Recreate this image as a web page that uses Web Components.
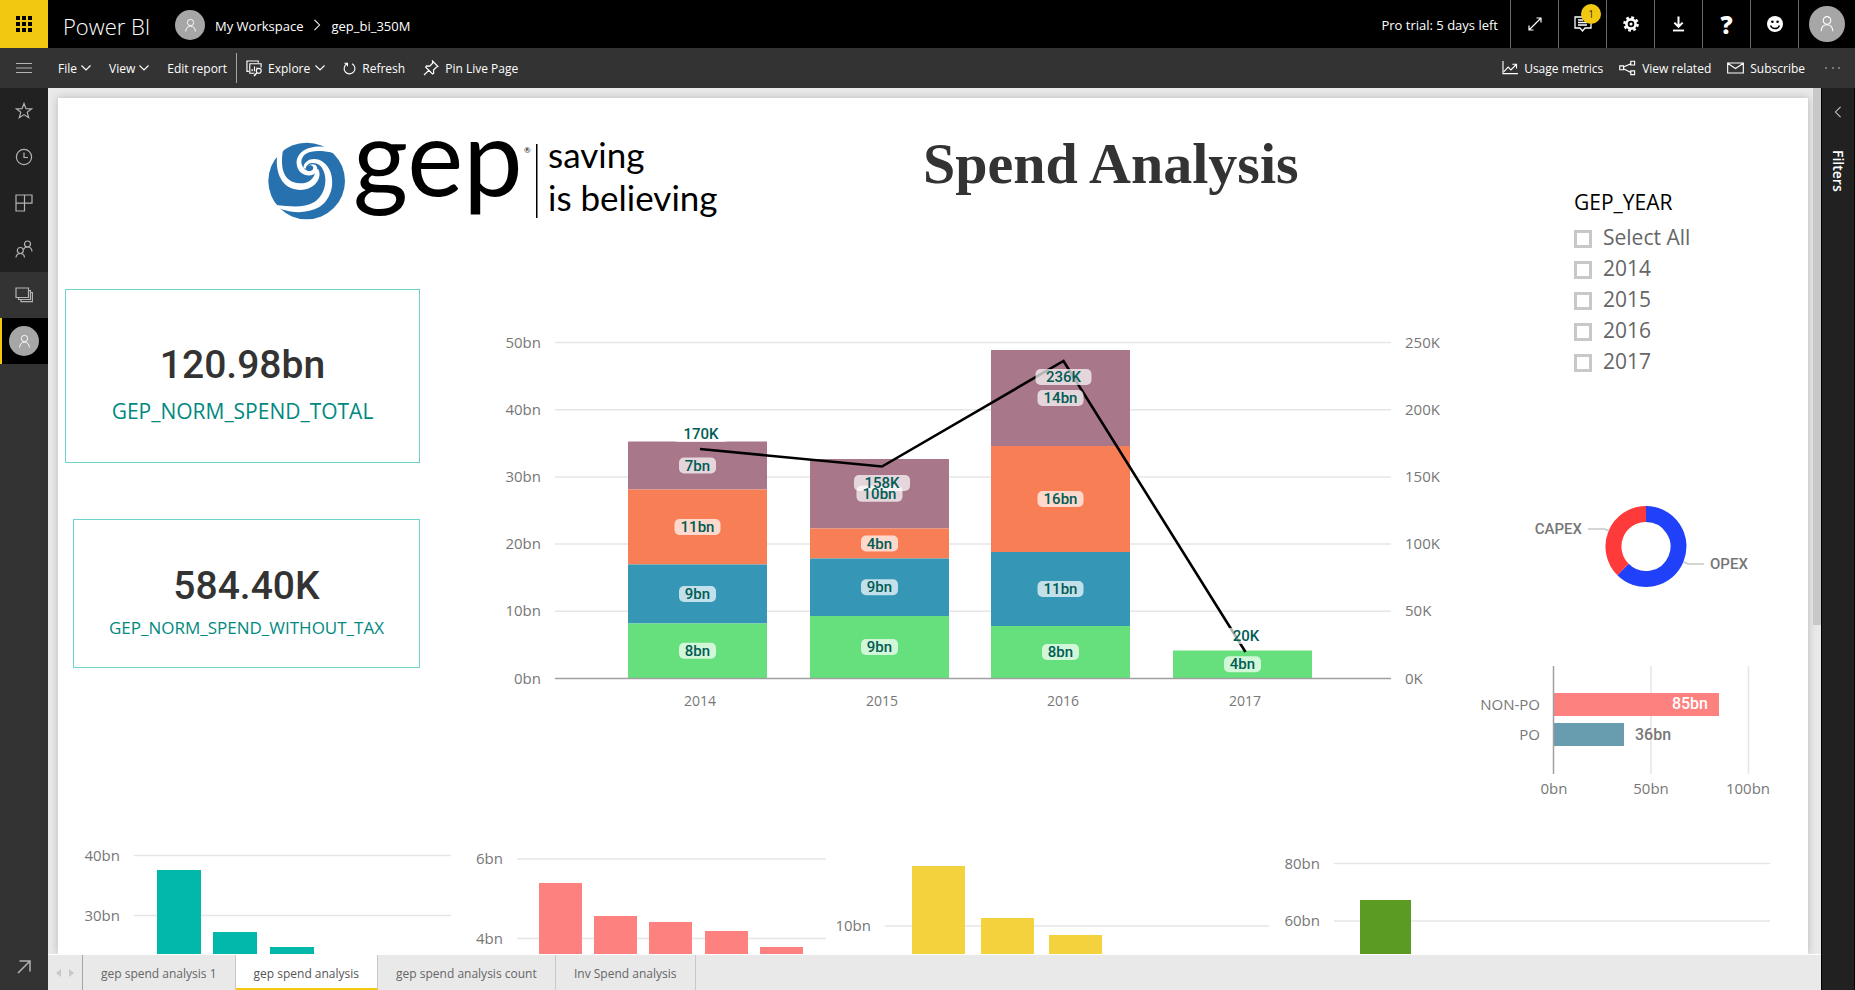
<!DOCTYPE html>
<html lang="en">
<head>
<meta charset="utf-8">
<title>Power BI - gep_bi_350M</title>
<style>
  body { margin: 0; background: #e9e9e9; font-family: "Open Sans", "Noto Sans", sans-serif; }
</style>
</head>
<body>
<power-bi-app></power-bi-app>
<script>
const UI = '"Open Sans","Noto Sans",sans-serif';
const DIN = 'Roboto,sans-serif';

/* Base class: renders css + html into an open shadow root. */
class Base extends HTMLElement {
  connectedCallback() {
    if (this.shadowRoot) return;
    const root = this.attachShadow({ mode: 'open' });
    const t = document.createElement('template');
    t.innerHTML = `<style>*{box-sizing:border-box}:host{display:block}${this.css ? this.css() : ''}</style>${this.html()}`;
    root.appendChild(t.content.cloneNode(true));
  }
}
const define = (n, c) => customElements.define(n, c);

/* ---------- icons ---------- */
const person = '<circle cx="10" cy="6" r="4.2"/><path d="M3.5 18c.2-4.600 2.800-7.200 6.500-7.200s6.300 2.600 6.500 7.200"/>';
const ICONS = {
  waffle: ['0 0 16 16', '<path fill="currentColor" stroke="none" d="M0 0h4v4H0zM6 0h4v4H6zM12 0h4v4h-4zM0 6h4v4H0zM6 6h4v4H6zM12 6h4v4h-4zM0 12h4v4H0zM6 12h4v4H6zM12 12h4v4h-4z"/>'],
  person: ['0 0 20 20', person],
  right: ['0 0 8 14', '<path d="M1 1l6 6-6 6"/>'],
  left: ['0 0 8 14', '<path d="M7 1L1 7l6 6"/>'],
  down: ['0 0 10 6', '<path d="M.5.5L5 5 9.500.5"/>'],
  menu: ['0 0 16 12', '<path d="M0 1.500h16M0 6h16M0 10.500h16"/>'],
  explore: ['0 0 18 18', '<path d="M3 12H1V1h12v2M9 14H4V4h12v4M6.500 12V9.500M9 12V7M11.500 9V8"/><circle cx="13.500" cy="11.500" r="2.600"/><path stroke-width="1.600" d="M11.600 13.500L8.500 17"/>'],
  refresh: ['0 0 14 14', '<path d="M4.500 1.800A5.800 5.800 0 1 0 9.800 1.900M4.800 4.500V1.300H1.500"/>'],
  pin: ['0 0 16 16', '<path d="M9.500 1l5.500 5.500-1.500.5-3 3 .2 3.200-1.200.8L2.700 7.200l.8-1.300 3.300.3 2.800-3zM5.800 10.400L1 15"/>'],
  chart: ['0 0 17 15', '<path d="M1 0v13.500h16M2 11.500l4.500-5 3 3L15 4M11 3.500h4.500V8"/>'],
  share: ['0 0 18 16', '<path d="M.8 5.800h4v4h-4zM12.500.8h4v4h-4zM12.500 11h4v4h-4zM4.800 7L12.500 3.500M4.800 8.800L12.500 12.800"/>'],
  mail: ['0 0 18 12', '<path d="M.700.700h16.600v10.600H.7zM.7 1l8.300 5.500L17.300 1"/>'],
  dots: ['0 0 16 4', '<path fill="currentColor" stroke="none" d="M0 1h2v2H0zM7 1h2v2H7zM13 1h2v2h-2z"/>'],
  expand: ['0 0 14 14', '<path d="M1.500 12.500l11-11M8.500 1h4.500v4.500M1 8.500V13h4.500"/>'],
  comment: ['0 0 18 17', '<path stroke-width="1.300" d="M10 1H1v11h5l2.500 3L11 12h6V8M4 4h5M4 6.500h9M4 9h9"/>'],
  gear: ['0 0 16 16', '<g fill="none"><circle cx="8" cy="8" r="4.600" stroke-width="2.600"/><circle cx="8" cy="8" r="6.600" stroke-width="2.400" stroke-dasharray="2.800 2.384"/></g><circle cx="8" cy="8" r="1.500" fill="currentColor" stroke="none"/>'],
  download: ['0 0 14 16', '<path stroke-width="2.200" d="M7 0v10.500M2.500 6.500L7 11l4.500-4.500"/><path stroke-width="2" d="M1 15h12"/>'],
  smile: ['0 0 16 16', '<circle cx="8" cy="8" r="8" fill="currentColor" stroke="none"/><g fill="#000" stroke="none"><circle cx="5.400" cy="5.800" r="1.300"/><circle cx="10.600" cy="5.800" r="1.300"/></g><path stroke="#000" stroke-width="1.400" d="M3.500 9.500c1.500 4 7.500 4 9 0"/>'],
  star: ['0 0 18 18', '<path d="M9 1.500l2 5.200 5.500.2-4.300 3.400 1.500 5.400L9 12.600l-4.700 3.100 1.500-5.400L1.500 6.900 7 6.700z"/>'],
  clock: ['0 0 18 18', '<circle cx="9" cy="9" r="7.600"/><path d="M9 4.500v5h4"/>'],
  apps: ['0 0 18 18', '<path d="M1 1h16v8.200H1zM1 9.200v7.800h8.500V1"/>'],
  people: ['0 0 18 18', '<circle cx="12.500" cy="4" r="3"/><circle cx="5.300" cy="10.500" r="3"/><path d="M1 17.500c.2-2.500 1.800-4 4.300-4s4 1.500 4.200 4M8.500 9.500c.7-1.700 2-2.500 4-2.500 2.600 0 4.300 1.500 4.500 4.500"/>'],
  stack: ['0 0 18 16', '<path d="M1 1h12.500v9.500H1zM3.500 10.500v2H15.500V3.500h-2M6 12.500v2.200h11.500V5.500h-2"/>'],
  out: ['0 0 14 14', '<path stroke-width="1.500" d="M1 13L13 1M2.500 1H13v10.500"/>'],
};
define('ui-icon', class extends Base {
  css() { return `:host{display:inline-flex;flex:none;width:${this.getAttribute('w') || 16}px;height:${this.getAttribute('h') || 16}px}svg{width:100%;height:100%;display:block}`; }
  html() { const [vb, p] = ICONS[this.getAttribute('name')];
    return `<svg viewBox="${vb}" fill="none" stroke="currentColor" stroke-width="1.200" aria-hidden="true">${p}</svg>`; }
});
define('user-avatar', class extends Base {
  css() { const s = this.getAttribute('size') || 30;
    return `:host{display:flex;flex:none;align-items:center;justify-content:center;width:${s}px;height:${s}px;border-radius:50%;background:#a6a6a6;color:#fff}`; }
  html() { const i = this.getAttribute('icon') || 15; return `<ui-icon name="person" w="${i}" h="${i}"></ui-icon>`; }
});

/* ---------- top bar ---------- */
define('top-bar', class extends Base {
  css() { return `
    :host{display:flex;height:48px;background:#000;color:#fff;font-size:13px;align-items:stretch}
    button{font:inherit;color:inherit;border:0;background:none;padding:0;display:flex;align-items:center;justify-content:center}
    a{color:inherit;text-decoration:none}
    .waffle{width:48px;background:#f2c811;color:#000}
    .brand{display:flex;align-items:center;margin-left:15px;font-size:22px;font-weight:300;width:112px;padding-top:3px}
    nav{display:flex;align-items:center;flex:1;gap:10px;padding-top:2px}
    nav a{padding-top:2px}
    .trial{display:flex;align-items:center;padding:2px 12px 0 0}
    .cell{width:48px;border-left:1px solid #666;position:relative}
    .cell.me{width:57px}
    .q{font-size:24px;font-weight:800;font-family:${UI}}
    .badge{position:absolute;left:22px;top:4px;width:20px;height:20px;border-radius:50%;background:#f2c811;color:#333;font-size:10px;line-height:20px;text-align:center}`; }
  html() { return `
    <button class="waffle" aria-label="Apps"><ui-icon name="waffle"></ui-icon></button>
    <a class="brand" href="#">Power BI</a>
    <nav><user-avatar></user-avatar><a href="#">My Workspace</a><ui-icon name="right" w="8" h="12"></ui-icon><a href="#">gep_bi_350M</a></nav>
    <span class="trial">Pro trial: 5 days left</span>
    <button class="cell" aria-label="Full screen"><ui-icon name="expand" w="14" h="14"></ui-icon></button>
    <button class="cell" aria-label="Notifications"><ui-icon name="comment" w="18" h="17"></ui-icon><span class="badge">1</span></button>
    <button class="cell" aria-label="Settings"><ui-icon name="gear" w="16" h="16"></ui-icon></button>
    <button class="cell" aria-label="Download"><ui-icon name="download" w="13" h="16"></ui-icon></button>
    <button class="cell q">?</button>
    <button class="cell" aria-label="Feedback"><ui-icon name="smile"></ui-icon></button>
    <button class="cell me" aria-label="Account"><user-avatar size="36" icon="18"></user-avatar></button>`; }
});

/* ---------- toolbar ---------- */
define('tool-bar', class extends Base {
  css() { return `
    :host{display:flex;height:40px;background:#333;color:#fff;font-size:12px;align-items:center}
    button{font:inherit;color:inherit;border:0;background:none;padding:0;display:flex;align-items:center;white-space:nowrap}
    .menu{width:48px;height:40px;justify-content:center;color:#b3b3b3}
    .group{display:flex;gap:16px}
    .left{padding-left:10px;flex:1;gap:18px}
    .drop{gap:4px}
    .ic{gap:6px}
    .explore{border-left:1px solid #a6a6a6;height:30px;padding-left:9px;margin-left:-9px;gap:5px}
    .more{color:#777;margin:0 14px 0 4px}`; }
  html() { return `
    <button class="menu" aria-label="Menu"><ui-icon name="menu" w="16" h="12"></ui-icon></button>
    <div class="group left" role="toolbar">
      <button class="drop"><span>File</span><ui-icon name="down" w="10" h="6"></ui-icon></button>
      <button class="drop"><span>View</span><ui-icon name="down" w="10" h="6"></ui-icon></button>
      <button><span>Edit report</span></button>
      <button class="explore"><ui-icon name="explore" w="17" h="17"></ui-icon><span>Explore</span><ui-icon name="down" w="10" h="6"></ui-icon></button>
      <button class="ic"><ui-icon name="refresh" w="13" h="13"></ui-icon><span>Refresh</span></button>
      <button class="ic"><ui-icon name="pin"></ui-icon><span>Pin Live Page</span></button>
    </div>
    <div class="group">
      <button class="ic"><ui-icon name="chart" w="16" h="14"></ui-icon><span>Usage metrics</span></button>
      <button class="ic"><ui-icon name="share" w="17" h="16"></ui-icon><span>View related</span></button>
      <button class="ic"><ui-icon name="mail" w="17" h="12"></ui-icon><span>Subscribe</span></button>
      <button class="more" aria-label="More"><ui-icon name="dots" w="16" h="4"></ui-icon></button>
    </div>`; }
});

/* ---------- left navigation ---------- */
define('side-nav', class extends Base {
  css() { return `
    :host{display:flex;flex-direction:column;width:48px;background:#333;color:#b3b3b3}
    button{border:0;padding:0;width:48px;height:46px;background:#212121;color:inherit;display:flex;align-items:center;justify-content:center}
    .stack{background:#333}
    .active{background:#000;border-left:2px solid #f2c811;border-right:2px solid #000}
    .out{background:none;margin-top:auto}`; }
  html() { return `
    <button aria-label="Favorites"><ui-icon name="star" w="18" h="18"></ui-icon></button>
    <button aria-label="Recent"><ui-icon name="clock" w="18" h="18"></ui-icon></button>
    <button aria-label="Apps"><ui-icon name="apps" w="18" h="18"></ui-icon></button>
    <button aria-label="Shared with me"><ui-icon name="people" w="18" h="18"></ui-icon></button>
    <button class="stack" aria-label="Workspaces"><ui-icon name="stack" w="18" h="16"></ui-icon></button>
    <button class="active" aria-label="My Workspace"><user-avatar></user-avatar></button>
    <button class="out" aria-label="Get data"><ui-icon name="out" w="14" h="14"></ui-icon></button>`; }
});

/* ---------- filters pane ---------- */
define('filters-pane', class extends Base {
  css() { return `
    :host{display:flex;flex-direction:column;align-items:center;width:34px;background:#212121;color:#fff;border-left:1px solid #000;border-right:1px solid #000;padding-top:18px}
    button{border:0;padding:0;background:none;color:#ccc;display:flex}
    span{writing-mode:vertical-rl;margin-top:32px;font-size:14px;font-weight:600;line-height:18px}`; }
  html() { return `<button aria-label="Expand filters"><ui-icon name="left" w="8" h="12"></ui-icon></button><span>Filters</span>`; }
});

/* ---------- page tabs ---------- */
define('page-tabs', class extends Base {
  css() { return `
    :host{display:flex;height:36px;background:#e9e9e9;border-top:1px solid #fff;font-size:12px;color:#666}
    .arrows{display:flex;width:35px;align-items:center;justify-content:space-evenly;border-right:1px solid #a6a6a6}
    button{font:inherit;color:inherit;background:none;border:0;padding:0}
    .arrows button{width:0;height:0;border:4px solid transparent}
    .prev{border-right:5px solid #c8c8c8!important;border-left-width:0!important}
    .next{border-left:5px solid #c8c8c8!important;border-right-width:0!important}
    .tab{padding:2px 18px 0;border-right:1px solid #c8c8c8;min-width:140px}
    .tab.on{background:#fff;border-bottom:2px solid #f2c811;padding-top:4px;color:#555}`; }
  html() { return `<div class="arrows"><button class="prev" aria-label="Previous"></button><button class="next" aria-label="Next"></button></div>
    <button class="tab">gep spend analysis 1</button><button class="tab on">gep spend analysis</button>
    <button class="tab">gep spend analysis count</button><button class="tab">Inv Spend analysis</button>`; }
});

/* ---------- report visuals ---------- */
define('gep-logo', class extends Base {
  css() { return `svg{display:block;width:100%;height:auto;overflow:visible}`; }
  html() { return `<svg viewBox="0 0 450 86" role="img" aria-label="gep saving is believing">
    <g transform="translate(0 3) scale(.3333) translate(-804 -188)">
      <circle cx="920" cy="302" r="115" fill="#2772ae"/>
      <g fill="#fff">
        <path d="M982 200C930 192 888 212 890 250C892 284 936 298 950 272C958 254 938 244 922 258C934 250 944 260 938 268C926 280 904 264 904 244C906 216 940 204 1000 218Z"/>
        <path d="M836 204C820 262 838 328 900 329C950 328 968 286 954 266L946 268C946 292 928 310 898 309C852 306 838 266 850 204Z"/>
        <path d="M826 377C862 400 920 402 958 380C1006 350 1008 276 972 247C946 226 912 238 910 262L917 266C920 244 948 244 962 258C986 286 980 342 942 366C910 384 872 378 826 374Z"/>
      </g>
    </g>
    <g font-family="Lato,sans-serif" fill="#000">
      <text x="85" y="56" font-size="106">gep</text>
      <text x="256" y="13" font-size="8">®</text>
      <path d="M268 4h1.500v74H268z"/>
      <text x="280" y="28" font-size="35">saving</text>
      <text x="280" y="71" font-size="35">is believing</text>
    </g></svg>`; }
});

define('kpi-card', class extends Base {
  css() { return `
    :host{display:flex;flex-direction:column;align-items:center;justify-content:center;border:1px solid #6ed4cb;text-align:center;padding-top:14px}
    .value{font:500 39px/48px ${DIN};color:#333}
    .label{font-size:21px;line-height:28px;color:#01897f;margin-top:8px;white-space:nowrap}
    :host([compact]) .label{font-size:17px;line-height:24px;margin-top:6px}`; }
  html() { return `<div class="value"><slot name="value"></slot></div><div class="label"><slot></slot></div>`; }
});

const text = (x, y, s, o = {}) => `<text x="${x}" y="${y}" text-anchor="${o.a || 'middle'}" font-size="${o.s || 15}" fill="${o.c || '#777'}" font-weight="${o.w || 400}" font-family='${o.f || UI}'>${s}</text>`;
const SVG_CSS = 'svg{display:block;width:100%;height:auto}';

define('combo-chart', class extends Base {
  css() { return SVG_CSS; }
  html() {
    const colors = ['#a87789', '#f77e55', '#3596b5', '#66df7d'];
    const data = [
      { x: 148, year: 2014, edges: [121.5, 169.5, 244.5, 303.5, 358], labels: ['7bn', '11bn', '9bn', '8bn'] },
      { x: 330, year: 2015, edges: [139, 208.5, 238.5, 296, 358], labels: ['10bn', '4bn', '9bn', '9bn'] },
      { x: 511, year: 2016, edges: [30, 126, 232, 306, 358], labels: ['14bn', '16bn', '11bn', '8bn'] },
      { x: 693, year: 2017, edges: [330.5, 358], labels: ['4bn'] }];
    const pills = [];
    let o = '';
    for (let i = 0; i <= 5; i++) {
      const y = 22.5 + i * 67.2;
      if (i < 5) o += `<path d="M75 ${y}H911" stroke="#e6e6e6" stroke-width="1.500"/>`;
      o += text(61, y + 5, (50 - i * 10) + 'bn', { a: 'end' }) + text(925, y + 5, (250 - i * 50) + 'K', { a: 'start' });
    }
    for (const d of data) {
      const c = colors.slice(4 - d.labels.length);
      d.labels.forEach((l, i) => {
        o += `<rect x="${d.x}" y="${d.edges[i]}" width="139" height="${d.edges[i + 1] - d.edges[i]}" fill="${c[i]}"/>`;
        pills.push([d.x + 69.5, (d.edges[i] + d.edges[i + 1]) / 2, l, l.length > 3 ? 46 : 37]);
      });
      o += text(d.x + 72, 386, d.year, { s: 14 });
    }
    o += '<path d="M75 358.500H911" stroke="#a0a0a0" stroke-width="1.500"/>';
    o += '<path d="M220 129L402 146.500 583.500 41 765.500 332" fill="none" stroke="#000" stroke-width="2.600"/>';
    pills.push([221, 114, '170K', 56], [402, 163, '158K', 56], [583.5, 57, '236K', 56], [766, 316, '20K', 46]);
    for (const [x, y, , w] of pills) o += `<rect x="${x - w / 2}" y="${y - 8}" width="${w}" height="16" rx="5" fill="#fff" opacity=".7"/>`;
    for (const [x, y, s] of pills) o += text(x, y + 5, s, { f: DIN, w: 500, c: '#015c55' });
    return `<svg viewBox="0 0 980 400" role="img" aria-label="Spend by year">${o}</svg>`;
  }
});

define('donut-chart', class extends Base {
  css() { return SVG_CSS; }
  html() { return `<svg viewBox="0 0 348 150" role="img" aria-label="CAPEX and OPEX">
    <g fill="none" stroke-width="16">
      <path d="M186 34A32.500 32.500 0 1 1 163 89.500" stroke="#2040fa"/>
      <path d="M163 89.500A32.500 32.500 0 0 1 186 34" stroke="#ff3a3a"/>
    </g>
    <path d="M128 49h17l4 2M224 82l4 2h16" fill="none" stroke="#c8c8c8" stroke-width="1.500"/>
    ${text(122, 54, 'CAPEX', { a: 'end', f: DIN, w: 500 })}${text(250, 89, 'OPEX', { a: 'start', f: DIN, w: 500 })}</svg>`; }
});

define('po-chart', class extends Base {
  css() { return SVG_CSS; }
  html() { return `<svg viewBox="0 0 348 180" role="img" aria-label="PO and non-PO spend">
    <path d="M191 36v108M288.500 36v108" stroke="#e6e6e6" stroke-width="1.500"/>
    <rect x="94" y="63" width="165" height="23" fill="#fd817e"/><rect x="94" y="93" width="70" height="23" fill="#679dae"/>
    <path d="M93.500 36v108" stroke="#a0a0a0" stroke-width="1.500"/>
    ${text(80, 80, 'NON-PO', { a: 'end' })}${text(80, 110, 'PO', { a: 'end' })}
    ${text(248, 79, '85bn', { a: 'end', f: DIN, w: 500, c: '#fff', s: 16 })}${text(175, 110, '36bn', { a: 'start', f: DIN, w: 500, s: 16 })}
    ${text(94, 164, '0bn')}${text(191, 164, '50bn')}${text(288, 164, '100bn')}</svg>`; }
});

/* Column chart set by attributes: ticks "label,y;...", bars "x,top;...". */
define('column-chart', class extends Base {
  css() { return SVG_CSS; }
  html() {
    const list = n => this.getAttribute(n).split(';').map(s => s.split(','));
    const [w, x0, x1, bw] = ['w', 'from', 'to', 'bar'].map(n => +this.getAttribute(n));
    return `<svg viewBox="0 0 ${w} 160">` +
      list('ticks').map(([l, y]) => `<path d="M${x0} ${y}H${x1}" stroke="#e6e6e6" stroke-width="1.500"/>` + text(x0 - 14, +y + 5, l, { a: 'end' })).join('') +
      list('bars').map(([x, y]) => `<rect x="${x}" y="${y}" width="${bw}" height="${160 - y}" fill="${this.getAttribute('color')}"/>`).join('') + '</svg>';
  }
});

define('year-slicer', class extends Base {
  css() { return `
    fieldset{border:0;margin:0;padding:0;min-width:0}
    legend{padding:0;font-size:21px;line-height:28px;color:#000;margin-bottom:6px}
    label{display:flex;align-items:center;gap:11px;font-size:21px;line-height:31px;color:#666;height:31px}
    input{appearance:none;width:18px;height:18px;margin:2px 0 0;border:3px solid #c8c8c8;background:#fff}`; }
  html() { return `<fieldset><legend>GEP_YEAR</legend>${['Select All', 2014, 2015, 2016, 2017].map(v => `<label><input type="checkbox">${v}</label>`).join('')}</fieldset>`; }
});

define('report-page', class extends Base {
  css() { return `
    :host{background:#fff;box-shadow:0 0 8px rgba(0,0,0,.22);min-width:0}
    .upper{display:grid;grid-template-columns:1402fr 348fr}
    .upper>*,.body>*,.lower>*,.head>*{min-width:0}
    .head{display:grid;grid-template-columns:210fr 450fr 205fr 537fr;height:191px;padding-top:42px}
    gep-logo{grid-column:2}
    h1{grid-column:4;margin:0;font:700 58px/48px "Liberation Serif",serif;color:#333;white-space:nowrap}
    .body{display:grid;grid-template-columns:422fr 980fr}
    .cards{padding:0 60px 0 7px}
    .first{height:174px}
    .second{height:149px;margin:56px 0 0 8px}
    combo-chart{margin-top:31px}
    .slicer{height:382px;padding:90px 0 0 114px}
    .lower{display:grid;grid-template-columns:410fr 360fr 448fr 532fr;margin-top:20px}`; }
  html() { return `
    <div class="upper">
      <div>
        <header class="head"><gep-logo></gep-logo><h1>Spend Analysis</h1></header>
        <div class="body">
          <div class="cards">
            <kpi-card class="first"><span slot="value">120.98bn</span>GEP_NORM_SPEND_TOTAL</kpi-card>
            <kpi-card class="second" compact><span slot="value">584.40K</span>GEP_NORM_SPEND_WITHOUT_TAX</kpi-card>
          </div>
          <combo-chart></combo-chart>
        </div>
      </div>
      <div><div class="slicer"><year-slicer></year-slicer></div><donut-chart></donut-chart><po-chart></po-chart></div>
    </div>
    <div class="lower">
      <column-chart w="410" from="76" to="393" bar="44" color="#01b8aa" ticks="40bn,25.5;30bn,85.5" bars="99,40;155,102;212,117"></column-chart>
      <column-chart w="360" from="49" to="358" bar="43" color="#fd817e" ticks="6bn,29;4bn,108.5" bars="71,53;126,86;181,92;237,101;292,117"></column-chart>
      <column-chart w="448" from="57" to="441" bar="53" color="#f4d23d" ticks="10bn,96" bars="84,36;153,88;221,105"></column-chart>
      <column-chart w="532" from="58" to="494" bar="51" color="#5b9b24" ticks="80bn,33.5;60bn,91" bars="84,70"></column-chart>
    </div>`; }
});

define('power-bi-app', class extends Base {
  css() { return `
    :host{display:flex;flex-direction:column;height:100vh}
    .work{flex:1;display:flex;min-height:0}
    main{flex:1;min-width:0;display:flex;flex-direction:column}
    .view{flex:1;min-height:0;display:flex;overflow:hidden;padding:10px 0 0 10px;background:#e9e9e9}
    report-page{flex:1;margin-right:5px}
    .track{width:8px;margin-top:-10px}
    .thumb{height:62%;background:#c8c8c8}`; }
  html() { return `<top-bar></top-bar><tool-bar></tool-bar>
    <div class="work"><side-nav></side-nav>
      <main><div class="view"><report-page></report-page><div class="track"><div class="thumb"></div></div></div><page-tabs></page-tabs></main>
      <filters-pane></filters-pane></div>`; }
});
</script>
</body>
</html>
